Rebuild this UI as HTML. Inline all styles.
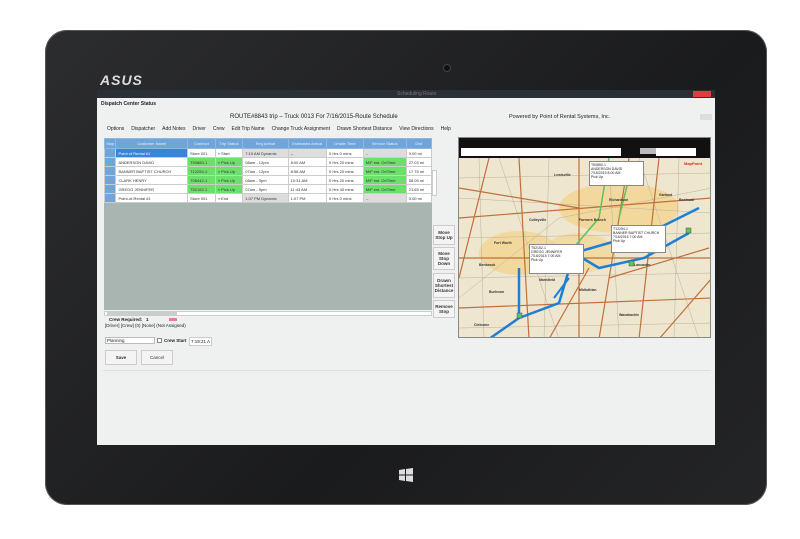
<!DOCTYPE html>
<html><head><meta charset="utf-8"><style>
*{margin:0;padding:0;box-sizing:border-box}
body{width:800px;height:539px;background:#fff;position:relative;overflow:hidden;font-family:"Liberation Sans",sans-serif}
.a{position:absolute}
.tab{left:45px;top:30px;width:722px;height:475px;border-radius:22px;background:linear-gradient(135deg,#2c2d2f,#1a1b1d 60%,#242527);box-shadow:0 0 0 1px #555 inset}
.scr{left:97px;top:90px;width:618px;height:355px;background:#eef1f0;overflow:hidden}
.t{font-size:5px;color:#222;white-space:nowrap}
table{border-collapse:collapse;font-size:4px;color:#333}
td{height:9px;border:1px solid #ccc;padding:0 2px;white-space:nowrap;background:#fff}
th{height:10px;background:#6fa5d8;color:#e8f0ff;font-weight:normal;border:1px solid #8fb8e0}
.g{background:#6be06b}.b{background:#6fa5d8}.gr{background:#ddd}
.btn{background:#f4f4f4;border:1px solid #ccc;font-size:4.5px;font-weight:bold;text-align:center;color:#333;display:flex;align-items:center;justify-content:center;line-height:5px}
.menu span{margin-right:7px}
.lb{font-size:3.5px;font-weight:bold;color:#333;position:absolute;white-space:nowrap}
</style></head><body>
<div class="a tab"></div>
<div class="a" style="left:100px;top:72px;color:#ddd;font-size:14px;font-weight:bold;font-style:italic;letter-spacing:1px">ASUS</div>
<div class="a" style="left:443px;top:64px;width:8px;height:8px;border-radius:50%;background:#111;border:1px solid #444"></div>
<svg class="a" style="left:399px;top:468px" width="14" height="14"><path d="M0 2L6 1V6.5H0ZM7 1L14 0V6.5H7ZM0 7.5H6V13L0 12ZM7 7.5H14V14L7 13Z" fill="#ddd"/></svg>
<div class="a scr">
 <div class="a" style="left:0;top:0;width:618px;height:8px;background:#2a3035"></div>
 <div class="a t" style="left:300px;top:1px;color:#777">Scheduling Route</div>
 <div class="a" style="left:596px;top:1px;width:18px;height:6px;background:#e23b3b"></div>
 <div class="a t" style="left:4px;top:11px;font-weight:bold">Dispatch Center Status</div>
 <div class="a t" style="left:133px;top:24px;font-size:6px">ROUTE#8843 trip – Truck 0013 For 7/16/2015-Route Schedule</div>
 <div class="a t" style="left:412px;top:24px;font-size:5.5px">Powered by Point of Rental Systems, Inc.</div>
 <div class="a" style="left:603px;top:24px;width:12px;height:6px;background:#ddd"></div>
 <div class="a t menu" style="left:10px;top:36px"><span>Options</span><span>Dispatcher</span><span>Add Notes</span><span>Driver</span><span>Crew</span><span>Edit Trip Name</span><span>Change Truck Assignment</span><span>Drawn Shortest Distance</span><span>View Directions</span><span>Help</span></div>
 <div class="a" style="left:7px;top:48px;width:328px;height:172px;background:#a9b5b0"></div>
 <table class="a" style="left:7px;top:48px;width:328px">
 <tr><th>Stop</th><th>Customer Name</th><th>Contract</th><th>Trip Status</th><th>Req Arrival</th><th>Estimated Arrival</th><th>Onsite Time</th><th>Service Status</th><th>Dist</th></tr>
 <tr><td class="b"></td><td style="background:#3b82d8;color:#fff">Point of Rental #1</td><td>Store 001</td><td>» Start</td><td class="gr">7:19 AM Dynamic</td><td class="gr">--</td><td>0 Hrs 0 mins</td><td class="gr">--</td><td>0.00 mi</td></tr>
 <tr><td class="b"></td><td>ANDERSON DAVID</td><td class="g">T50860-1</td><td class="g">» Pick Up</td><td>08am - 12pm</td><td>8:00 AM</td><td>0 Hrs 20 mins</td><td class="g">M/F est. OnTime</td><td>27.03 mi</td></tr>
 <tr><td class="b"></td><td>BANNER BAPTIST CHURCH</td><td class="g">T12254-1</td><td class="g">» Pick Up</td><td>07am - 12pm</td><td>8:58 AM</td><td>0 Hrs 20 mins</td><td class="g">M/F est. OnTime</td><td>17.75 mi</td></tr>
 <tr><td class="b"></td><td>CLARK HENRY</td><td class="g">T08442-1</td><td class="g">» Pick Up</td><td>08am - 3pm</td><td>10:31 AM</td><td>0 Hrs 20 mins</td><td class="g">M/F est. OnTime</td><td>58.05 mi</td></tr>
 <tr><td class="b"></td><td>GREGG JENNIFER</td><td class="g">T52152-1</td><td class="g">» Pick Up</td><td>07am - 5pm</td><td>11:43 AM</td><td>0 Hrs 40 mins</td><td class="g">M/F est. OnTime</td><td>21.65 mi</td></tr>
 <tr><td class="b"></td><td>Point-of-Rental #1</td><td>Store 001</td><td>» End</td><td class="gr">1:07 PM Dynamic</td><td>1:07 PM</td><td>0 Hrs 0 mins</td><td class="gr">--</td><td>0.00 mi</td></tr>
 </table>
 <div class="a" style="left:7px;top:221px;width:328px;height:5px;background:#fff;border:1px solid #ccc"></div>
 <div class="a" style="left:10px;top:222px;width:70px;height:3px;background:#ccc"></div>
 <div class="a t" style="left:12px;top:227px;font-weight:bold;font-size:4.5px">Crew Required: &nbsp; 1</div>
 <div class="a" style="left:72px;top:228px;width:8px;height:3px;background:#e87a9a"></div>
 <div class="a t" style="left:8px;top:233px;font-size:4.5px">[Driver] [Crew] (0) [None] (Not Assigned)</div>
 <div class="a" style="left:8px;top:247px;width:50px;height:7px;background:#fff;border:1px solid #bbb"></div>
 <div class="a t" style="left:10px;top:248px;font-size:4.5px">Planning</div>
 <div class="a" style="left:60px;top:248px;width:5px;height:5px;background:#fff;border:1px solid #888"></div>
 <div class="a t" style="left:67px;top:248px;font-size:4.5px;font-weight:bold">Crew Start</div>
 <div class="a t" style="left:92px;top:247px;font-size:4.5px;background:#fff;border:1px solid #ccc;padding:1px">7:19:21 A</div>
 <div class="a btn" style="left:8px;top:260px;width:32px;height:15px">Save</div>
 <div class="a btn" style="left:44px;top:260px;width:32px;height:15px;font-weight:normal">Cancel</div>
 <div class="a" style="left:6px;top:280px;width:608px;height:1px;background:#ddd"></div>
 <div class="a" style="left:335px;top:80px;width:5px;height:26px;background:#fff;border:1px solid #ccc"></div>
 <div class="a btn" style="left:336px;top:135px;width:22px;height:20px">Move Stop Up</div>
 <div class="a btn" style="left:336px;top:157px;width:22px;height:23px">Move Stop Down</div>
 <div class="a btn" style="left:336px;top:183px;width:22px;height:25px">Drawn Shortest Distance</div>
 <div class="a btn" style="left:336px;top:210px;width:22px;height:18px">Remove Stop</div>
 <div class="a" style="left:361px;top:47px;width:253px;height:201px;background:#efe6cf;overflow:hidden;border:1px solid #888">
  <div class="a" style="left:0;top:0;width:253px;height:20px;background:#111"></div>
  <div class="a" style="left:2px;top:10px;width:160px;height:8px;background:#fff"></div>
  <div class="a" style="left:181px;top:10px;width:30px;height:6px;background:#bbb"></div>
  <div class="a" style="left:197px;top:10px;width:40px;height:8px;background:#fff"></div>
  <svg class="a" style="left:0;top:20px" width="253" height="181">
   <ellipse cx="160" cy="50" rx="60" ry="25" fill="#f3cf7c" opacity=".6"/>
   <ellipse cx="60" cy="95" rx="40" ry="22" fill="#f3cf7c" opacity=".6"/>
   <ellipse cx="120" cy="95" rx="35" ry="20" fill="#f3cf7c" opacity=".5"/>
   <g stroke="#b9b0a0" stroke-width=".5" fill="none">
    <path d="M0 20L253 15M0 40L253 55M0 80L253 75M0 120L253 115M0 170L253 165M20 0L25 181M90 0L85 181M150 0L160 181M220 0L215 181M40 0L100 181M180 0L240 181M0 140L100 60L253 30"/></g>
   <g stroke="#c0703a" stroke-width="1.2" fill="none">
    <path d="M0 100H253M120 0V181M60 0L70 181M0 60L253 40M0 150L253 140M200 0L180 181M30 0L0 120M250 90L150 120M0 30L120 50M170 0L140 181M90 181L130 110M253 120L200 181"/></g>
   <path d="M150 0L140 60L110 95M170 20L160 60" stroke="#5fc35f" stroke-width="1.5" fill="none"/>
   <path d="M60 110L60 160L30 181M60 160L100 145L115 95L150 85L200 70L240 50M115 95L140 110L185 100L230 75" stroke="#1e7fd6" stroke-width="2.5" fill="none"/>
   <path d="M95 140L110 120" stroke="#1e7fd6" stroke-width="2" fill="none"/>
   <g fill="#5fc35f" stroke="#333" stroke-width=".4"><rect x="112" y="90" width="5" height="5"/><rect x="227" y="70" width="5" height="5"/><rect x="58" y="155" width="5" height="5"/><rect x="170" y="103" width="5" height="5"/></g>
  </svg>
  <div class="lb" style="left:95px;top:35px">Lewisville</div><div class="lb" style="left:70px;top:80px">Colleyville</div>
  <div class="lb" style="left:35px;top:103px">Fort Worth</div><div class="lb" style="left:120px;top:80px">Farmers Branch</div>
  <div class="lb" style="left:200px;top:55px">Garland</div><div class="lb" style="left:150px;top:60px">Richardson</div>
  <div class="lb" style="left:20px;top:125px">Benbrook</div><div class="lb" style="left:30px;top:152px">Burleson</div>
  <div class="lb" style="left:80px;top:140px">Mansfield</div><div class="lb" style="left:175px;top:125px">Lancaster</div>
  <div class="lb" style="left:160px;top:175px">Waxahachie</div><div class="lb" style="left:220px;top:60px">Rockwall</div>
  <div class="lb" style="left:15px;top:185px">Cleburne</div><div class="lb" style="left:120px;top:150px">Midlothian</div>
  <div class="a t" style="left:130px;top:23px;width:55px;height:25px;background:#fff;border:1px solid #888;font-size:3.5px;padding:1px">T50860-1<br>ANDERSON DAVID<br>7/16/2015 8:00 AM<br>Pick Up</div>
  <div class="a t" style="left:152px;top:87px;width:55px;height:28px;background:#fff;border:1px solid #888;font-size:3.5px;padding:1px">T12254-1<br>BANNER BAPTIST CHURCH<br>7/16/2015 7:00 AM<br>Pick Up</div>
  <div class="a t" style="left:70px;top:106px;width:55px;height:30px;background:#fff;border:1px solid #888;font-size:3.5px;padding:1px">T52152-1<br>GREGG JENNIFER<br>7/16/2015 7:00 AM<br>Pick Up</div>
  <div class="a t" style="left:225px;top:23px;color:#d22;font-size:4px;font-weight:bold">MapPoint</div>
 </div>
</div>
</body></html>
